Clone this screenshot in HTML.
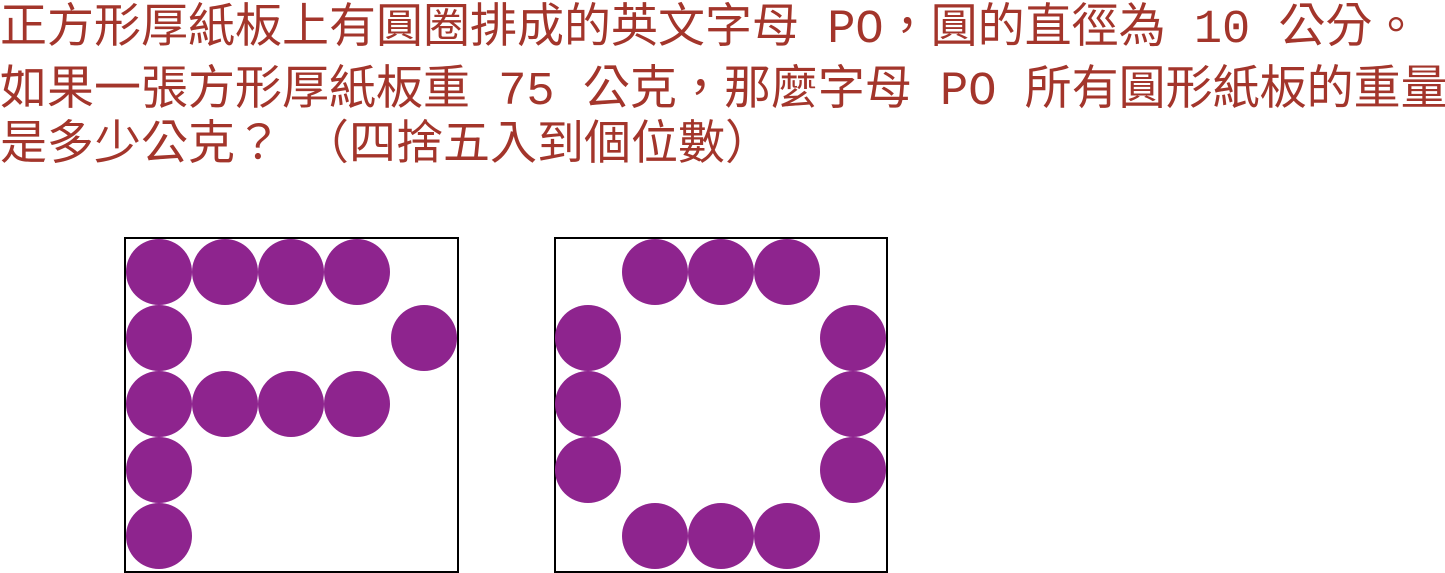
<!DOCTYPE html>
<html><head><meta charset="utf-8"><style>
html,body{margin:0;padding:0;background:#fff;width:1445px;height:573px;overflow:hidden;position:relative}
.l{position:absolute;left:0;white-space:pre;font-family:"Liberation Mono","Noto Sans CJK TC",monospace;font-size:47px;line-height:57px;color:#a3352b}
</style></head><body>
<div class="l" style="top:2px">正方形厚紙板上有圓圈排成的英文字母 PO，圓的直徑為 10 公分。</div>
<div class="l" style="top:64px">如果一張方形厚紙板重 75 公克，那麼字母 PO 所有圓形紙板的重量</div>
<div class="l" style="top:119px">是多少公克？<span style="display:inline-block;width:20px"></span>（四捨五入到個位數）</div>
<svg width="1445" height="573" style="position:absolute;left:0;top:0">
<g fill="none" stroke="#000" stroke-width="2">
<rect x="125" y="238" width="333" height="334"/>
<rect x="555" y="238" width="332" height="334"/>
</g>
<g fill="#8e248e">
<circle cx="159" cy="272" r="33"/><circle cx="225" cy="272" r="33"/><circle cx="291" cy="272" r="33"/><circle cx="357" cy="272" r="33"/>
<circle cx="159" cy="338" r="33"/><circle cx="424" cy="338" r="33"/>
<circle cx="159" cy="404" r="33"/><circle cx="225" cy="404" r="33"/><circle cx="291" cy="404" r="33"/><circle cx="357" cy="404" r="33"/>
<circle cx="159" cy="470" r="33"/><circle cx="159" cy="536" r="33"/>
<circle cx="655" cy="272" r="33"/><circle cx="721" cy="272" r="33"/><circle cx="787" cy="272" r="33"/>
<circle cx="588" cy="338" r="33"/><circle cx="853" cy="338" r="33"/>
<circle cx="588" cy="404" r="33"/><circle cx="853" cy="404" r="33"/>
<circle cx="588" cy="470" r="33"/><circle cx="853" cy="470" r="33"/>
<circle cx="655" cy="536" r="33"/><circle cx="721" cy="536" r="33"/><circle cx="787" cy="536" r="33"/>
</g>
</svg>
</body></html>
